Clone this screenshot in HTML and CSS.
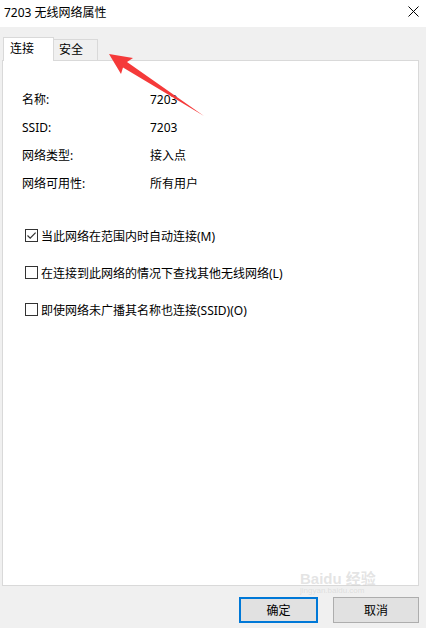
FILE: index.html
```html
<!DOCTYPE html>
<html>
<head>
  <meta charset="utf-8">
  <title>7203 无线网络属性</title>
  <link rel="stylesheet" href="styles.css">
</head>
<body>
  <div class="window">
    <div class="titlebar">
      <span class="title">7203 无线网络属性</span>
      <button class="close" aria-label="关闭">
        <svg width="11" height="11" viewBox="0 0 11 11"><path d="M0.5 0.5 L10.5 10.5 M10.5 0.5 L0.5 10.5" stroke="#000" stroke-width="1" fill="none"/></svg>
      </button>
    </div>

    <div class="dialog">
      <div class="tabs">
        <div class="tab active">连接</div>
        <div class="tab">安全</div>
      </div>

      <div class="panel">
        <div class="props">
          <div class="prop"><span class="label">名称:</span><span class="value">7203</span></div>
          <div class="prop"><span class="label">SSID:</span><span class="value">7203</span></div>
          <div class="prop"><span class="label">网络类型:</span><span class="value">接入点</span></div>
          <div class="prop"><span class="label">网络可用性:</span><span class="value">所有用户</span></div>
        </div>

        <div class="options">
          <label class="option">
            <span class="box checked">
              <svg width="11" height="11" viewBox="0 0 11 11"><path d="M1.5 5.5 L4.2 8.2 L9.6 2.6" stroke="#333" stroke-width="1.2" fill="none"/></svg>
            </span>
            当此网络在范围内时自动连接(M)
          </label>
          <label class="option"><span class="box"></span>在连接到此网络的情况下查找其他无线网络(L)</label>
          <label class="option"><span class="box"></span>即使网络未广播其名称也连接(SSID)(O)</label>
        </div>
      </div>

      <div class="buttons">
        <button class="btn default">确定</button>
        <button class="btn">取消</button>
      </div>
    </div>

    <!-- annotation drawn over the screenshot -->
    <svg class="arrow" width="426" height="628" viewBox="0 0 426 628">
      <polygon points="109,54 133,58 127,62 204,116 123,67.5 121,74" fill="#f53a3a"/>
    </svg>
    <div class="watermark">
      <span class="wm-logo">Baidu 经验</span>
      <span class="wm-url">jingyan.baidu.com</span>
    </div>
  </div>
</body>
</html>
```

FILE: styles.css
```css
body {
  margin: 0;
  padding: 0;
  font-family: 'Noto Sans', 'Noto Sans CJK SC', sans-serif;
  font-size: 12px;
  color: #000;
  background: #f0f0f0;
}

.window {
  position: relative;
  width: 426px;
  height: 628px;
  overflow: hidden;
  background: #f0f0f0;
}

.titlebar {
  height: 27px;
  background: #fff;
  display: flex;
  align-items: center;
  justify-content: space-between;
  padding: 0 0 0 4px;
}

.title {
  font-size: 12px;
  margin-top: -3px;
}

.close {
  width: 26px;
  height: 27px;
  border: none;
  background: none;
  padding: 0;
  display: flex;
  align-items: center;
  justify-content: center;
  margin-top: -5px;
}

.dialog {
  padding: 10px 7px 0 2px;
}

.tabs {
  display: flex;
  align-items: flex-end;
  padding-left: 1px;
  height: 23px;
  position: relative;
  z-index: 1;
}

.tab {
  height: 20px;
  line-height: 20px;
  padding: 0 7px 0 5px;
  border: 1px solid #d9d9d9;
  border-bottom: none;
  background: #f0f0f0;
  width: 31px;
}

.tab.active {
  height: 23px;
  line-height: 21px;
  background: #fff;
  width: 37px;
  padding: 0 6px;
  margin-bottom: -1px;
  align-self: flex-end;
}

.tab.active + .tab {
  border-left: none;
}

.panel {
  height: 524px;
  background: #fff;
  border: 1px solid #d9d9d9;
  padding: 0;
}

.props {
  padding: 25px 0 0 19px;
}

.prop {
  display: flex;
  height: 28px;
  line-height: 28px;
}

.label {
  width: 128px;
}

.options {
  padding: 19px 0 0 22px;
}

.option {
  display: flex;
  align-items: center;
  height: 37px;
}

.box {
  width: 11px;
  height: 11px;
  border: 1px solid #333;
  background: #fff;
  margin-right: 3px;
  display: flex;
  align-items: center;
  justify-content: center;
}

.buttons {
  display: flex;
  justify-content: flex-end;
  gap: 15px;
  padding-top: 11px;
  padding-right: 0;
}

.btn {
  height: 26px;
  font-family: 'Noto Sans', 'Noto Sans CJK SC', sans-serif;
  font-size: 12px;
  color: #000;
  background: #e1e1e1;
  border: 1px solid #adadad;
  padding: 0;
  width: 86px;
}

.btn.default {
  width: 79px;
  border: 2px solid #0078d7;
}

.arrow {
  position: absolute;
  top: 0;
  left: 0;
  pointer-events: none;
}

/* faint screenshot watermark, kept clear of the buttons */
.watermark {
  position: absolute;
  left: 300px;
  top: 571px;
  display: flex;
  flex-direction: column;
  gap: 1px;
  white-space: nowrap;
  color: rgba(210, 210, 210, 0.6);
  pointer-events: none;
  line-height: 1;
}

.wm-logo {
  font-family: 'Liberation Sans', 'Noto Sans CJK SC', sans-serif;
  font-size: 15px;
  font-weight: bold;
}

.wm-url {
  font-family: 'Liberation Sans', sans-serif;
  font-size: 8px;
}
```
